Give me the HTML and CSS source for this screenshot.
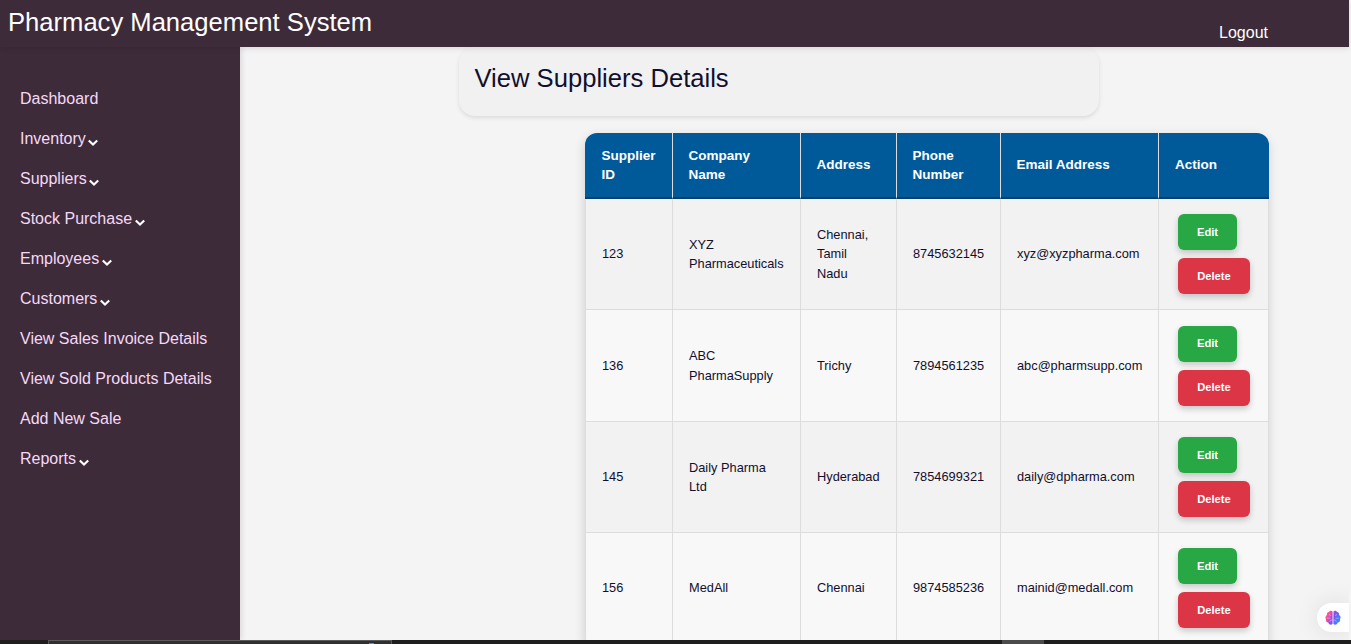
FILE: index.html
```html
<!DOCTYPE html>
<html lang="en">
<head>
<meta charset="utf-8">
<title>Pharmacy Management System</title>
<link rel="stylesheet" href="styles.css">
</head>
<body>
<svg class="defs" aria-hidden="true">
  <symbol id="caret" viewBox="0 0 10 8"><path d="M.8 1.4 L5 5.600 L9.200 1.400" fill="none" stroke="#fff" stroke-width="2.100"/></symbol>
</svg>
<header class="topbar">
  <h1 class="brand">Pharmacy Management System</h1>
  <a class="logout">Logout</a>
</header>
<div class="layout">
  <nav class="sidebar">
    <a class="nav-item">Dashboard</a>
    <a class="nav-item">Inventory<svg class="caret"><use href="#caret"/></svg></a>
    <a class="nav-item">Suppliers<svg class="caret"><use href="#caret"/></svg></a>
    <a class="nav-item">Stock Purchase<svg class="caret"><use href="#caret"/></svg></a>
    <a class="nav-item">Employees<svg class="caret"><use href="#caret"/></svg></a>
    <a class="nav-item">Customers<svg class="caret"><use href="#caret"/></svg></a>
    <a class="nav-item">View Sales Invoice Details</a>
    <a class="nav-item">View Sold Products Details</a>
    <a class="nav-item">Add New Sale</a>
    <a class="nav-item">Reports<svg class="caret"><use href="#caret"/></svg></a>
  </nav>
  <main class="content">
    <h2 class="page-title">View Suppliers Details</h2>
    <div class="table-card">
    <table class="suppliers">
      <colgroup><col class="c-id"><col class="c-company"><col class="c-address"><col class="c-phone"><col class="c-email"><col class="c-action"></colgroup>
      <thead>
        <tr><th>Supplier ID</th><th>Company Name</th><th>Address</th><th>Phone Number</th><th>Email Address</th><th>Action</th></tr>
      </thead>
      <tbody>
        <tr class="row"><td>123</td><td>XYZ Pharmaceuticals</td><td>Chennai, Tamil Nadu</td><td>8745632145</td><td>xyz@xyzpharma.com</td><td class="actions"><button class="btn edit">Edit</button><button class="btn delete">Delete</button></td></tr>
        <tr class="row tall"><td>136</td><td>ABC PharmaSupply</td><td>Trichy</td><td>7894561235</td><td>abc@pharmsupp.com</td><td class="actions"><button class="btn edit">Edit</button><button class="btn delete">Delete</button></td></tr>
        <tr class="row"><td>145</td><td>Daily Pharma Ltd</td><td>Hyderabad</td><td>7854699321</td><td>daily@dpharma.com</td><td class="actions"><button class="btn edit">Edit</button><button class="btn delete">Delete</button></td></tr>
        <tr class="row"><td>156</td><td>MedAll</td><td>Chennai</td><td>9874585236</td><td>mainid@medall.com</td><td class="actions"><button class="btn edit">Edit</button><button class="btn delete">Delete</button></td></tr>
      </tbody>
    </table>
    </div>
  </main>
</div>
<div class="assistant">
  <svg class="brain" viewBox="0 0 16 16">
    <defs><linearGradient id="bg" gradientUnits="userSpaceOnUse" x1="1" y1="2" x2="15" y2="9"><stop offset="0" stop-color="#ff7a2d"/><stop offset=".25" stop-color="#f14fae"/><stop offset=".55" stop-color="#8b4df0"/><stop offset="1" stop-color="#2f8bff"/></linearGradient></defs>
    <path fill="url(#bg)" d="M7.6 1.6C7 .3 4.500.3 4 2 2.400 2 1.400 3.600 2 5 .2 5.800 0 8 1 9 .5 10.800 1.500 12.500 3.300 12.600 3.700 15 6.800 15.600 7.600 13.800ZM8.400 1.600C9 .3 11.500.3 12 2 13.600 2 14.600 3.600 14 5 15.800 5.800 16 8 15 9 15.500 10.800 14.500 12.500 12.700 12.600 12.300 15 9.200 15.600 8.400 13.800Z"/>
    <path fill="none" stroke="#fff" stroke-opacity=".45" stroke-width=".8" d="M4 4.500Q5.300 4.200 5.500 6M2 8.200H5.500M7.300 10Q5 9.600 4.700 11.800M12 4.500Q10.700 4.200 10.500 6M14 8.200H10.500M8.700 10Q11 9.600 11.300 11.800"/>
  </svg>
</div>
<div class="taskbar">
  <div class="search"><span class="spark"></span></div>
  <div class="task"></div>
</div>
</body>
</html>
```
FILE: styles.css
```css
* { box-sizing: border-box; }
body {
  margin: 0;
  height: 644px;
  overflow: hidden;
  display: flex;
  flex-direction: column;
  position: relative;
  background: #f4f4f4;
  color: #120f2d;
  font-family: "Liberation Sans", Arial, sans-serif;
}
.defs { position: absolute; width: 0; height: 0; }
.topbar {
  flex: none;
  width: 1349px;
  height: 47px;
  padding: 0 81px 0 8px;
  display: flex;
  justify-content: space-between;
  align-items: flex-start;
  position: relative;
  z-index: 2;
  background: #3e2b39;
  color: #fff;
  box-shadow: 0 2px 5px rgba(0, 0, 0, .1);
}
.brand { margin: 7px 0 0; font-size: 25.6px; font-weight: 400; line-height: 30px; }
.logout { margin-top: 24px; font-size: 16px; line-height: 18px; }
.layout { flex: 1; min-height: 0; display: flex; }
.sidebar {
  width: 240px;
  flex: none;
  padding-top: 32px;
  background: #3e2b39;
  box-shadow: 2px 0 5px rgba(0, 0, 0, .1);
}
.nav-item {
  display: flex;
  align-items: center;
  height: 40px;
  padding-left: 20px;
  color: #f5d9f7;
  font-size: 16px;
  white-space: nowrap;
}
.caret { width: 10px; height: 8px; margin: 7px 0 0 2.5px; }
.content { flex: 1; min-width: 0; overflow: hidden; }
.page-title {
  width: 640px;
  height: 69px;
  margin: 0 0 0 219px;
  padding: 16px 15.5px 0;
  border-radius: 16px;
  background: #f1f1f1;
  box-shadow: 0 2px 4px rgba(0, 0, 0, .1);
  font-size: 25.6px;
  font-weight: 400;
  line-height: 30px;
}
.table-card {
  width: 683px;
  margin: 17px 0 0 345px;
  border-radius: 12px 12px 0 0;
  box-shadow: 0 4px 12px rgba(0, 0, 0, .16);
}
.suppliers {
  width: 684px;
  table-layout: fixed;
  border-spacing: 0;
  font-size: 12.8px;
  line-height: 19.4px;
}
.c-id { width: 88px; }
.c-company { width: 128px; }
.c-address { width: 96px; }
.c-phone { width: 104px; }
.c-email { width: 158px; }
.c-action { width: 110px; }
th {
  height: 66px;
  padding: 0 15.5px;
  border-right: 1px solid #ddd;
  border-bottom: 2px solid #003f70;
  background: #005a9a;
  color: #fff;
  font-size: 13.5px;
  text-align: left;
}
th:first-child { padding-left: 16.5px; border-top-left-radius: 12px; }
th:last-child { padding-left: 16px; border-top-right-radius: 12px; border-right: 0; }
td {
  height: 111px;
  padding: 0 16px;
  border-right: 1px solid #ddd;
  border-bottom: 1px solid #ddd;
}
td:first-child { border-left: 1px solid #ddd; }
.row { background: #f2f2f2; }
.row:nth-child(even) { background: #f8f8f8; }
.tall td { height: 112px; }
.actions { padding: 0 0 0 19px; }
.btn {
  display: block;
  width: 72px;
  height: 36px;
  padding: 0;
  border: 0;
  border-radius: 6px;
  box-shadow: 0 3px 6px rgba(0, 0, 0, .2);
  color: #fff;
  font: bold 11.2px "Liberation Sans", Arial, sans-serif;
}
.edit { width: 59px; margin-bottom: 8px; background: #28a745; }
.tall .btn { padding-bottom: 1px; }
.delete { background: #dc3545; }
.assistant {
  position: absolute;
  left: 1317px;
  top: 603px;
  width: 32px;
  height: 29px;
  padding: 7px 0 0 8px;
  border-radius: 15px 0 0 15px;
  background: #fff;
  box-shadow: 0 0 24px rgba(0, 0, 0, .1);
  clip-path: inset(-40px 0 -8px -48px);
}
.brain { display: block; width: 16px; height: 16px; }
.taskbar {
  flex: none;
  height: 4px;
  display: flex;
  padding-left: 48px;
  position: relative;
  background: #1d1e1d;
}
.search {
  width: 344px;
  height: 4px;
  padding: 2px 0 0 320px;
  border: 1px solid #5b5b5b;
  border-bottom: 0;
  background: #303030;
}
.spark { display: block; width: 5px; height: 1px; background: #5b8bd8; }
.task { width: 42px; height: 4px; margin-left: 610px; background: #4b4b4b; }
```
